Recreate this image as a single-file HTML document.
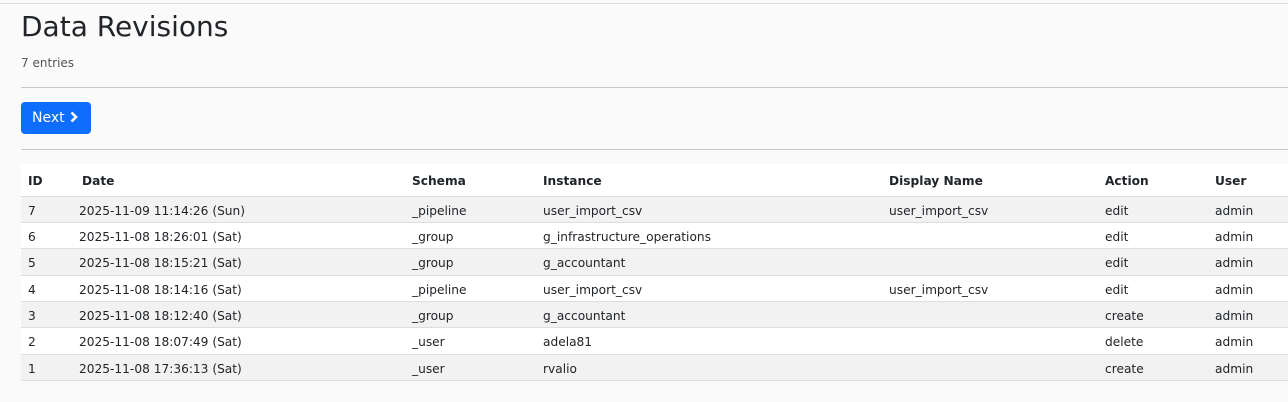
<!DOCTYPE html>
<html><head><style>
body{margin:0;width:1288px;height:402px;background:#fafafa;font-family:"DejaVu Sans","Liberation Sans",sans-serif;color:#212529;position:relative;overflow:hidden}
.top{position:absolute;left:0;right:0;top:3px;border-top:1px solid #dcdcdc}
h1{position:absolute;left:21px;top:8px;margin:0;font-weight:400;font-size:28px;line-height:38px}
.ent{position:absolute;left:21px;top:56px;font-size:12px;color:#555}
.hr{position:absolute;left:21px;right:0;border-top:1px solid #c8c8c8}
.btn{position:absolute;left:21px;top:102px;width:70px;height:32px;background:#0d6efd;border-radius:4px;color:#fff;font-size:14px;line-height:33px;box-sizing:border-box;padding-left:11px}
.row{position:absolute;left:21px;right:0;font-size:12.2px;border-bottom:1px solid #dedede}
.row span{position:absolute;white-space:nowrap}
.h{top:164px;height:32px;background:#fff;font-weight:bold;line-height:35px}
.r{height:25px;line-height:28px}
.o{background:#f2f2f2}.e{background:#fff}
</style></head><body>
<div class="top"></div>
<h1>Data Revisions</h1>
<div class="ent">7 entries</div>
<div class="hr" style="top:87px"></div>
<div class="btn">Next <svg width="10" height="12" viewBox="0 0 10 12" style="vertical-align:-1px"><path d="M2.5 1.5 L7 6 L2.5 10.5" stroke="#fff" stroke-width="2.6" fill="none"/></svg></div>
<div class="hr" style="top:149px"></div>
<div class="row h"><span style="left:7px">ID</span><span style="left:61px">Date</span><span style="left:391px">Schema</span><span style="left:522px">Instance</span><span style="left:868px">Display Name</span><span style="left:1084px">Action</span><span style="left:1194px">User</span></div>
<div class="row r o" style="top:197px"><span style="left:7px">7</span><span style="left:58px">2025-11-09 11:14:26 (Sun)</span><span style="left:391px">_pipeline</span><span style="left:522px">user_import_csv</span><span style="left:868px">user_import_csv</span><span style="left:1084px">edit</span><span style="left:1194px">admin</span></div>
<div class="row r e" style="top:223px"><span style="left:7px">6</span><span style="left:58px">2025-11-08 18:26:01 (Sat)</span><span style="left:391px">_group</span><span style="left:522px">g_infrastructure_operations</span><span style="left:1084px">edit</span><span style="left:1194px">admin</span></div>
<div class="row r o" style="top:249px;height:26px"><span style="left:7px">5</span><span style="left:58px">2025-11-08 18:15:21 (Sat)</span><span style="left:391px">_group</span><span style="left:522px">g_accountant</span><span style="left:1084px">edit</span><span style="left:1194px">admin</span></div>
<div class="row r e" style="top:276px"><span style="left:7px">4</span><span style="left:58px">2025-11-08 18:14:16 (Sat)</span><span style="left:391px">_pipeline</span><span style="left:522px">user_import_csv</span><span style="left:868px">user_import_csv</span><span style="left:1084px">edit</span><span style="left:1194px">admin</span></div>
<div class="row r o" style="top:302px"><span style="left:7px">3</span><span style="left:58px">2025-11-08 18:12:40 (Sat)</span><span style="left:391px">_group</span><span style="left:522px">g_accountant</span><span style="left:1084px">create</span><span style="left:1194px">admin</span></div>
<div class="row r e" style="top:328px;height:26px"><span style="left:7px">2</span><span style="left:58px">2025-11-08 18:07:49 (Sat)</span><span style="left:391px">_user</span><span style="left:522px">adela81</span><span style="left:1084px">delete</span><span style="left:1194px">admin</span></div>
<div class="row r o" style="top:355px"><span style="left:7px">1</span><span style="left:58px">2025-11-08 17:36:13 (Sat)</span><span style="left:391px">_user</span><span style="left:522px">rvalio</span><span style="left:1084px">create</span><span style="left:1194px">admin</span></div>
</body></html>
